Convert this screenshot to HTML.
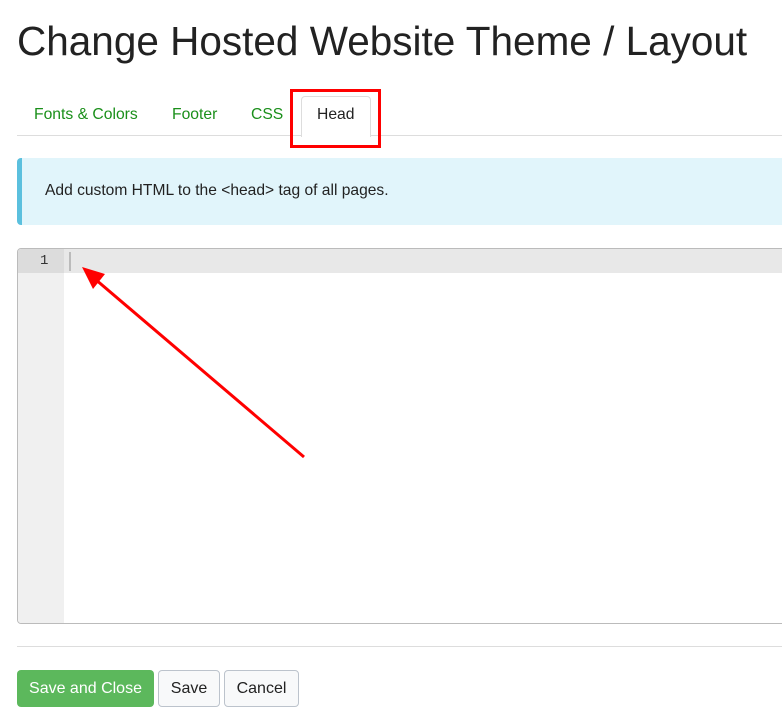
<!DOCTYPE html><html><head><style>
body{margin:0;width:782px;height:723px;overflow:hidden;background:#fff;font-family:"Liberation Sans",sans-serif;position:relative}
.a{position:absolute}
</style></head><body>
<div class="a" style="left:17px;top:18px;font-size:40.5px;color:#222;white-space:nowrap">Change Hosted Website Theme / Layout</div>
<div class="a" style="left:17px;top:135px;width:765px;height:1px;background:#ddd"></div>
<div class="a" style="left:34px;top:106px;font-size:15.7px;color:#1a8f1a">Fonts &amp; Colors</div>
<div class="a" style="left:172px;top:106px;font-size:15.7px;color:#1a8f1a">Footer</div>
<div class="a" style="left:251px;top:106px;font-size:15.7px;color:#1a8f1a">CSS</div>
<div class="a" style="left:301px;top:96px;width:68px;height:40px;border:1px solid #ddd;border-bottom:none;border-radius:4px 4px 0 0;background:#fff"></div>
<div class="a" style="left:317px;top:106px;font-size:15.7px;color:#222">Head</div>
<div class="a" style="left:290px;top:89px;width:85px;height:53px;border:3px solid #f00"></div>
<div class="a" style="left:17px;top:158px;width:765px;height:67px;background:#e1f5fb;border-left:5px solid #5bc0de;border-radius:4px 0 0 4px;box-sizing:border-box"></div>
<div class="a" style="left:45px;top:182px;font-size:15.6px;color:#222">Add custom HTML to the &lt;head&gt; tag of all pages.</div>
<div class="a" style="left:17px;top:248px;width:780px;height:376px;border:1px solid #bbb;border-radius:4px;box-sizing:border-box;overflow:hidden">
<div class="a" style="left:0;top:0;width:46px;height:376px;background:#f0f0f0"></div>
<div class="a" style="left:0;top:0;width:46px;height:24px;background:#dcdcdc"></div>
<div class="a" style="left:46px;top:0;width:740px;height:24px;background:#e8e8e8"></div>
<div class="a" style="left:51px;top:3px;width:2px;height:19px;background:#bbb"></div>
<div class="a" style="left:22px;top:4px;font-size:14px;color:#333;font-family:'Liberation Mono',monospace">1</div>
</div>
<svg class="a" style="left:0;top:0" width="782" height="723"><line x1="304" y1="457" x2="95" y2="279" stroke="#f00" stroke-width="3"/><polygon points="82,267 105,274 93,289" fill="#f00"/></svg>
<div class="a" style="left:17px;top:646px;width:765px;height:1px;background:#ddd"></div>
<div class="a" style="left:17px;top:670px;width:137px;height:37px;background:#5cb85c;border-radius:4px;color:#fff;font-size:16px;line-height:37px;text-align:center">Save and Close</div>
<div class="a" style="left:158px;top:670px;width:62px;height:37px;border:1px solid #bcc3cc;box-sizing:border-box;background:#f8f9fa;border-radius:4px;color:#222;font-size:16px;line-height:35px;text-align:center">Save</div>
<div class="a" style="left:224px;top:670px;width:75px;height:37px;border:1px solid #bcc3cc;box-sizing:border-box;background:#f8f9fa;border-radius:4px;color:#222;font-size:16px;line-height:35px;text-align:center">Cancel</div>
</body></html>
